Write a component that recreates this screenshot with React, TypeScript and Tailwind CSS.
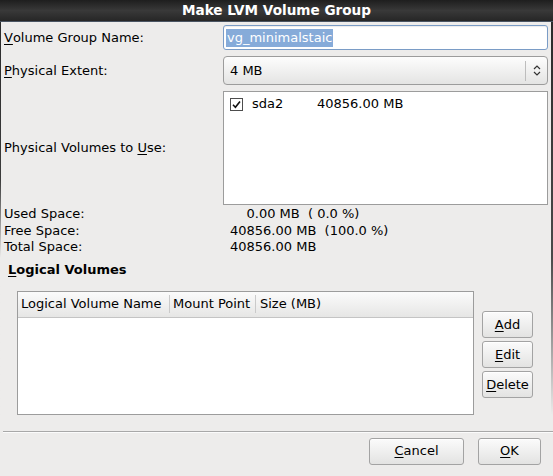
import React from 'react';

const Mn: React.FC<{ k: string; rest: string }> = ({ k, rest }) => (
  <>
    <span className="underline underline-offset-[2px] decoration-1">{k}</span>
    {rest}
  </>
);

const GtkButton: React.FC<{ className?: string; children: React.ReactNode }> = ({ className = '', children }) => (
  <button
    className={`h-[27px] rounded-[3px] border border-[#a3a3a3] bg-gradient-to-b from-[#fbfbfb] to-[#e3e3e2] text-[13px] text-black flex items-center justify-center shadow-[inset_0_1px_0_#ffffff] ${className}`}
  >
    {children}
  </button>
);

const App: React.FC = () => {
  const spaces = [
    { label: 'Used Space:', value: '    0.00 MB  ( 0.0 %)' },
    { label: 'Free Space:', value: '40856.00 MB  (100.0 %)' },
    { label: 'Total Space:', value: '40856.00 MB' }
  ];

  return (
    <div className="w-[553px] h-[476px] overflow-hidden bg-[#edeceb] text-black text-[13px] font-['DejaVu_Sans','Liberation_Sans',sans-serif] flex flex-col">
      {/* Title bar */}
      <div className="h-[22px] shrink-0 bg-gradient-to-b from-[#1e1e1e] via-[#393939] to-[#262626] flex items-center justify-center border-b border-[#4a5563]">
        <span className="text-white font-bold text-[13.6px] leading-none">Make LVM Volume Group</span>
      </div>

      {/* Upper body */}
      <div className="flex">
        <div className="w-px bg-gradient-to-b from-[#2b2b2b] via-[#3b3b3b] via-40% to-[#edeceb] to-60%" />
        <div className="flex-1 flex flex-col">
          <div className="grid grid-cols-[219px_1fr] pl-[3px] pr-[3px] pt-[3px]">
            <div className="h-[25px] flex items-center">
              <Mn k="V" rest="olume Group Name:" />
            </div>
            <div className="h-[25px] rounded-[3px] border border-[#7a9cc6] bg-white flex items-center pl-[2px] shadow-[inset_0_1px_1px_rgba(0,0,0,0.08)]">
              <span className="bg-[#86abd9] text-white px-px leading-[18px]">vg_minimalstaic</span>
            </div>

            <div className="h-[29px] mt-[6px] flex items-center">
              <Mn k="P" rest="hysical Extent:" />
            </div>
            <div className="h-[29px] mt-[6px] rounded-[4px] border border-[#9c9c9c] bg-gradient-to-b from-[#fdfdfd] to-[#e4e4e3] flex items-center">
              <span className="flex-1 pl-[6px]">4 MB</span>
              <div className="h-[20px] w-px bg-[#bdbdbd]" />
              <div className="w-[21px] flex items-center justify-center">
                <svg width="8" height="13" viewBox="0 0 8 13" fill="none" stroke="#333" strokeWidth="1.2">
                  <path d="M1 5 L4 2 L7 5" />
                  <path d="M1 8 L4 11 L7 8" />
                </svg>
              </div>
            </div>

            <div className="h-[114px] mt-[6px] flex items-center">
              Physical Volumes to&nbsp;<Mn k="U" rest="se:" />
            </div>
            <div className="h-[114px] mt-[6px] border border-[#9c9c9c] bg-white">
              <div className="flex items-center h-[22px] mt-[1px] pl-[6px]">
                <svg width="13" height="13" viewBox="0 0 13 13" className="shrink-0">
                  <rect x="0.5" y="0.5" width="12" height="12" fill="#fff" stroke="#4d4d4d" />
                  <path d="M3 6.8 L5.4 9.2 L10 3.4" fill="none" stroke="#111" strokeWidth="1.6" />
                </svg>
                <span className="ml-[9px] w-[65px]">sda2</span>
                <span>40856.00 MB</span>
              </div>
            </div>
          </div>

          {/* Space summary */}
          <div className="pl-[3px] leading-[16.5px] mt-px">
            {spaces.map((s) => (
              <div key={s.label} className="grid grid-cols-[226px_auto] whitespace-pre">
                <span>{s.label}</span>
                <span>{s.value}</span>
              </div>
            ))}
          </div>

          <div className="mt-[6px] pl-[7px] font-bold leading-[16px]">
            <Mn k="L" rest="ogical Volumes" />
          </div>

          {/* Logical volume table */}
          <div className="mt-[13px] pl-[16px] flex items-center">
            <div className="w-[457px] h-[124px] border border-[#9c9c9c] bg-white flex flex-col">
              <div className="h-[26px] shrink-0 bg-gradient-to-b from-[#fbfbfb] to-[#e6e6e5] border-b border-[#c4c4c4] flex items-center">
                <div className="w-[152px] pl-[3px] border-r border-[#cacaca] h-[18px] flex items-center">Logical Volume Name</div>
                <div className="w-[86px] pl-[3px] border-r border-[#cacaca] h-[18px] flex items-center">Mount Point</div>
                <div className="flex-1 pl-[4px]">Size (MB)</div>
              </div>
            </div>
            <div className="ml-[8px] w-[51px] pt-[4px] flex flex-col gap-[3px]">
              <GtkButton className="w-full"><Mn k="A" rest="dd" /></GtkButton>
              <GtkButton className="w-full"><Mn k="E" rest="dit" /></GtkButton>
              <GtkButton className="w-full"><Mn k="D" rest="elete" /></GtkButton>
            </div>
          </div>
        </div>
        <div className="w-[2px] bg-gradient-to-b from-[#2b2b2b] via-[#4a4a4a] via-60% to-[#edeceb]" />
      </div>

      {/* Footer */}
      <div className="mt-[16px] ml-[3px] border-t border-[#a8a8a8] border-b border-b-[#fbfbfb]" />
      <div className="mt-[5px] flex justify-end gap-[14px] pr-[12px]">
        <GtkButton className="w-[95px]"><Mn k="C" rest="ancel" /></GtkButton>
        <GtkButton className="w-[63px]"><Mn k="O" rest="K" /></GtkButton>
      </div>
    </div>
  );
};

export default App;
